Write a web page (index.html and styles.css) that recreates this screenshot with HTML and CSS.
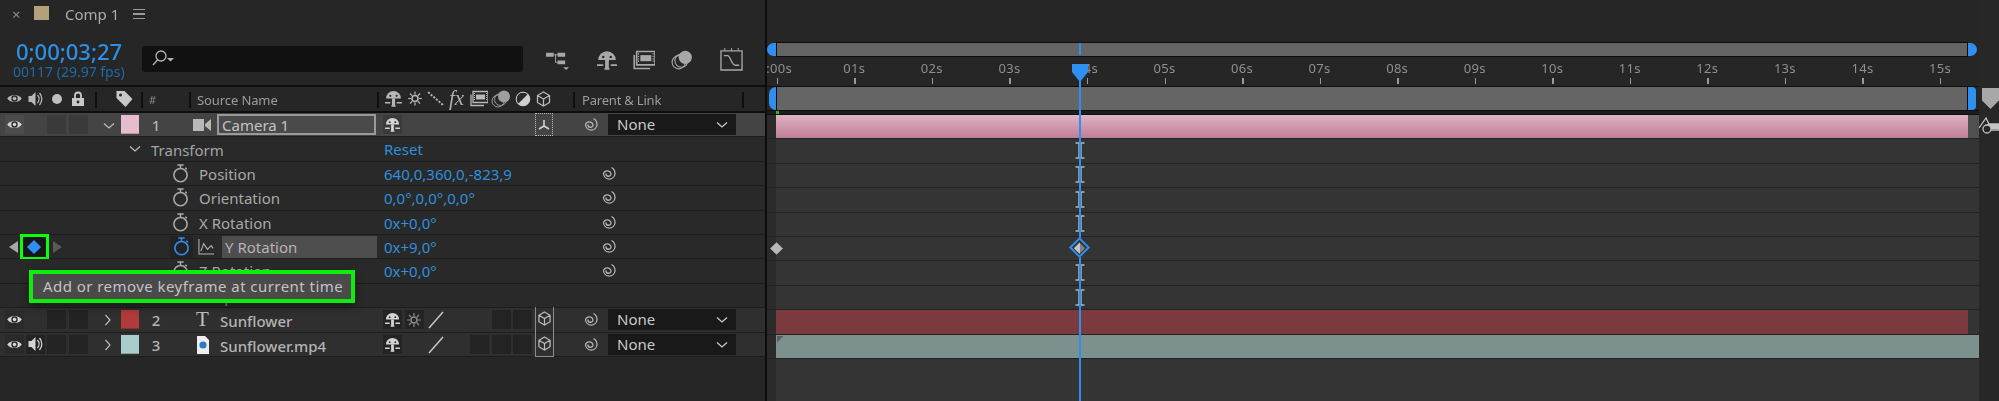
FILE: index.html
```html
<!DOCTYPE html>
<html lang="en">
<head>
<meta charset="utf-8">
<title>Comp 1</title>
<link rel="stylesheet" href="styles.css">
</head>
<body>
<svg class="defs" width="0" height="0" aria-hidden="true">
  <symbol id="eye" viewBox="0 0 14 10"><path d="M.2 5C3 .6 11 .6 13.800 5 11 9.400 3 9.400.2 5Z" fill="currentColor"/><circle cx="7" cy="5" r="3" fill="#2a2a2a"/><circle cx="7" cy="5" r="1.700" fill="currentColor"/></symbol>
  <symbol id="speaker" viewBox="0 0 16 16"><path d="M1 5h3l4-4v14l-4-4H1Z" fill="currentColor"/><path d="M10 4a6 6 0 0 1 0 8M12 2a9 9 0 0 1 0 12" fill="none" stroke="currentColor" stroke-width="1.300"/></symbol>
  <symbol id="lock" viewBox="0 0 14 16"><path d="M4 7V4.500a3 3 0 0 1 6 0V7" fill="none" stroke="currentColor" stroke-width="1.800"/><rect x="1" y="7" width="12" height="8" fill="currentColor"/><circle cx="7" cy="11" r="1.400" fill="#262626"/></symbol>
  <symbol id="tag" viewBox="0 0 18 18"><path d="M1 1h8l8 8-7 8-9-9Z" fill="currentColor"/><circle cx="5" cy="5" r="1.500" fill="#262626"/></symbol>
  <symbol id="shy" viewBox="0 0 18 16"><path d="M2 8a7 7 0 0 1 14 0Z" fill="currentColor"/><circle cx="6" cy="5.500" r="1" fill="#2a2a2a"/><circle cx="12" cy="5.500" r="1" fill="#2a2a2a"/><path d="M7.500 8h3v7h-3Z" fill="currentColor"/><path d="M1 12h5M12 12h5M7 15h4" stroke="currentColor" stroke-width="1.400"/></symbol>
  <symbol id="sun" viewBox="0 0 14 14"><circle cx="7" cy="7" r="3" fill="none" stroke="currentColor" stroke-width="1.500"/><path d="M7 0v3M7 11v3M0 7h3M11 7h3M2 2l2 2M10 10l2 2M12 2l-2 2M4 10l-2 2" stroke="currentColor" stroke-width="1.200"/></symbol>
  <symbol id="blur" viewBox="0 0 16 14"><path d="M1 1l14 12" stroke="currentColor" stroke-width="1.800" stroke-dasharray="2 1.300"/></symbol>
  <symbol id="film" viewBox="0 0 18 16"><path d="M3 1h15v11H3Z" fill="none" stroke="currentColor" stroke-width="1.300"/><path d="M1 4v11h13" fill="none" stroke="currentColor" stroke-width="1.300"/><path d="M6 4h9v5H6Z" fill="currentColor"/><path d="M4 3h1M4 5h1M4 7h1M4 9h1M16 3h1M16 5h1M16 7h1M16 9h1" stroke="currentColor"/></symbol>
  <symbol id="layers" viewBox="0 0 20 18"><circle cx="13" cy="7" r="6" fill="currentColor"/><circle cx="9.500" cy="10" r="6" fill="none" stroke="currentColor"/><circle cx="7" cy="11.500" r="6" fill="none" stroke="currentColor"/></symbol>
  <symbol id="adj" viewBox="0 0 16 16"><circle cx="8" cy="8" r="7" fill="#d0d0d0"/><path d="M3 13A7 7 0 0 1 13 3Z" fill="#2a2a2a"/><circle cx="8" cy="8" r="6.800" fill="none" stroke="#d0d0d0"/></symbol>
  <symbol id="cube" viewBox="0 0 14 16"><path d="M7 1l6 3.500v7L7 15l-6-3.500v-7ZM1 4.500 7 8l6-3.500M7 8v7" fill="none" stroke="currentColor" stroke-width="1.300"/></symbol>
  <symbol id="spiral" viewBox="0 0 18 18"><path d="M7 8.500A2.500 2.500 0 0 0 12 9 3.800 3.800 0 0 0 4.500 9 5.800 5.800 0 0 0 16 9 7 7 0 0 0 12.500 2.500" fill="none" stroke="currentColor" stroke-width="1.300"/></symbol>
  <symbol id="watch" viewBox="0 0 16 18"><circle cx="8" cy="10.500" r="6.300" fill="none" stroke="currentColor" stroke-width="1.500"/><path d="M5 1h6M8 1v3M12.500 3.500l1.500 1.500" stroke="currentColor" stroke-width="1.500" fill="none"/></symbol>
  <symbol id="chev-d" viewBox="0 0 12 8"><path d="M1 1.500l5 4.500 5-4.500" fill="none" stroke="currentColor" stroke-width="1.300"/></symbol>
  <symbol id="chev-r" viewBox="0 0 8 12"><path d="M1.500 1l4.500 5-4.500 5" fill="none" stroke="currentColor" stroke-width="1.200"/></symbol>
  <symbol id="ibeam" viewBox="0 0 10 17"><path d="M.5 1h9M.5 16h9" fill="none" stroke="#aab4bc" stroke-width="1.400"/><path d="M5 1v15" stroke="#aab4bc" stroke-width="3.500"/></symbol>
</svg>

<div class="app">
  <section class="left">
    <div class="tabbar">
      <span class="close">×</span>
      <span class="comp-swatch"></span>
      <span class="tab-name">Comp 1</span>
      <span class="burger"><i></i><i></i><i></i></span>
    </div>
    <div class="controls">
      <div class="time">
        <div class="timecode">0;00;03;27</div>
        <div class="frames">00117 (29.97 fps)</div>
      </div>
      <div class="search">
        <svg class="search-ico" viewBox="0 0 24 18"><circle cx="10" cy="7" r="5" fill="none" stroke="#b5b5b5" stroke-width="1.300"/><path d="M6.500 11 2 16" stroke="#b5b5b5" stroke-width="1.300"/><path d="M16 9h7l-3.500 3.500Z" fill="#b5b5b5"/></svg>
      </div>
      <div class="tools">
        <svg class="tool t-flow" viewBox="0 0 26 22"><path d="M1 3h8v4H1ZM13 3h8v4h-8ZM13 11h8v4h-8Z" fill="#a8a8a8"/><path d="M9 5h4M11 5v8h2" stroke="#a8a8a8" fill="none"/><path d="M19 18h6l-3 3Z" fill="#a8a8a8"/></svg>
        <svg class="tool t-shy"><use href="#shy"/></svg>
        <svg class="tool t-film"><use href="#film"/></svg>
        <svg class="tool t-layers"><use href="#layers"/></svg>
        <svg class="tool t-graph" viewBox="0 0 24 24"><path d="M1 3h22v20H1Z" fill="none" stroke="#a8a8a8" stroke-width="1.400"/><path d="M5 0v3M12 0v3M19 0v3" stroke="#a8a8a8"/><path d="M4 8h4c3 0 4 10 8 10h4" fill="none" stroke="#a8a8a8" stroke-width="1.400"/></svg>
      </div>
    </div>
    <div class="head">
      <svg class="ic h-eye"><use href="#eye"/></svg>
      <svg class="ic h-spk"><use href="#speaker"/></svg>
      <span class="h-dot"></span>
      <svg class="ic h-lock"><use href="#lock"/></svg>
      <span class="sep s1"></span>
      <svg class="ic h-tag"><use href="#tag"/></svg>
      <span class="sep s2"></span>
      <span class="h-num">#</span>
      <span class="sep s3"></span>
      <span class="h-src">Source Name</span>
      <span class="sep s4"></span>
      <svg class="ic h-sw"><use href="#shy"/></svg>
      <svg class="ic h-sw2"><use href="#sun"/></svg>
      <svg class="ic h-sw3"><use href="#blur"/></svg>
      <span class="h-fx">fx</span>
      <svg class="ic h-sw4"><use href="#film"/></svg>
      <svg class="ic h-sw5"><use href="#layers"/></svg>
      <svg class="ic h-sw6"><use href="#adj"/></svg>
      <svg class="ic h-sw7"><use href="#cube"/></svg>
      <span class="sep s5"></span>
      <span class="h-parent">Parent &amp; Link</span>
      <span class="sep s6"></span>
    </div>

    <div class="row layer sel">
      <span class="cell c-eye"><svg class="ic eye"><use href="#eye"/></svg></span>
      <span class="cell c-a"></span><span class="cell c-b"></span>
      <svg class="ic chev-d c-chev"><use href="#chev-d"/></svg>
      <span class="label pink"></span>
      <span class="num">1</span>
      <svg class="layer-ico" viewBox="0 0 18 14"><path d="M0 1h11v12H0ZM12 6l6-5v12l-6-5Z" fill="#b8b8b8"/></svg>
      <span class="name-box">Camera 1</span>
      <span class="cell c-s1"><svg class="ic sw"><use href="#shy"/></svg></span>
      <span class="cell c-cam"><svg class="ic cam" viewBox="0 0 16 14"><path d="M8 2v6M8 8 3 11M8 8l5 3" stroke="#d0d0d0" stroke-width="1.600" fill="none"/></svg></span>
      <svg class="ic spiral-l"><use href="#spiral"/></svg>
      <span class="select">None<svg class="ic sel-chev"><use href="#chev-d"/></svg></span>
    </div>

    <div class="row prop">
      <svg class="ic chev-d t-chev"><use href="#chev-d"/></svg>
      <span class="t-label">Transform</span>
      <span class="val">Reset</span>
    </div>
    <div class="row prop">
      <svg class="ic watch"><use href="#watch"/></svg>
      <span class="p-label">Position</span>
      <span class="val">640,0,360,0,-823,9</span>
      <svg class="ic spiral"><use href="#spiral"/></svg>
    </div>
    <div class="row prop">
      <svg class="ic watch"><use href="#watch"/></svg>
      <span class="p-label">Orientation</span>
      <span class="val">0,0°,0,0°,0,0°</span>
      <svg class="ic spiral"><use href="#spiral"/></svg>
    </div>
    <div class="row prop">
      <svg class="ic watch"><use href="#watch"/></svg>
      <span class="p-label">X Rotation</span>
      <span class="val">0x+0,0°</span>
      <svg class="ic spiral"><use href="#spiral"/></svg>
    </div>
    <div class="row prop">
      <span class="tri-l"></span>
      <span class="kf-box"><span class="kf-blue"></span></span>
      <span class="tri-r"></span>
      <span class="watch-box"><svg class="ic watch on"><use href="#watch"/></svg></span>
      <svg class="ic graph" viewBox="0 0 18 18"><path d="M1 1v16h16M3 14l3-8 4 6 4-4 2 3" fill="none" stroke="#b5b5b5" stroke-width="1.100"/></svg>
      <span class="y-label">Y Rotation</span>
      <span class="val">0x+9,0°</span>
      <svg class="ic spiral"><use href="#spiral"/></svg>
    </div>
    <div class="row prop">
      <svg class="ic watch"><use href="#watch"/></svg>
      <span class="p-label">Z Rotation</span>
      <span class="val">0x+0,0°</span>
      <svg class="ic spiral"><use href="#spiral"/></svg>
    </div>
    <div class="row prop">
      <svg class="ic chev-r o-chev"><use href="#chev-r"/></svg>
      <span class="o-label">Camera Options</span>
    </div>

    <div class="row layer">
      <span class="cell c-eye"><svg class="ic eye"><use href="#eye"/></svg></span>
      <span class="cell c-a"></span><span class="cell c-b"></span>
      <svg class="ic chev-r c-chev-r"><use href="#chev-r"/></svg>
      <span class="label red"></span>
      <span class="num">2</span>
      <span class="t-ico">T</span>
      <span class="name">Sunflower</span>
      <span class="cell c-s1"><svg class="ic sw"><use href="#shy"/></svg></span>
      <span class="cell c-s2"><svg class="ic sw-sun"><use href="#sun"/></svg></span>
      <svg class="ic slash" viewBox="0 0 16 18"><path d="M1 17 15 1" stroke="#c8c8c8" stroke-width="1.500"/></svg>
      <span class="cell c-s5"></span><span class="cell c-s6"></span>
      <span class="cube-cell top"><svg class="ic cube3"><use href="#cube"/></svg></span>
      <svg class="ic spiral-l"><use href="#spiral"/></svg>
      <span class="select">None<svg class="ic sel-chev"><use href="#chev-d"/></svg></span>
    </div>
    <div class="row layer">
      <span class="cell c-eye"><svg class="ic eye"><use href="#eye"/></svg></span>
      <span class="cell c-spk"><svg class="ic spk"><use href="#speaker"/></svg></span>
      <span class="cell c-a"></span><span class="cell c-b"></span>
      <svg class="ic chev-r c-chev-r"><use href="#chev-r"/></svg>
      <span class="label teal"></span>
      <span class="num">3</span>
      <svg class="file-ico" viewBox="0 0 14 18"><path d="M1 0h8l4 4v14H1Z" fill="#eee"/><circle cx="7" cy="9" r="3.600" fill="#2a7cc0"/></svg>
      <span class="name">Sunflower.mp4</span>
      <span class="cell c-s1"><svg class="ic sw"><use href="#shy"/></svg></span>
      <svg class="ic slash" viewBox="0 0 16 18"><path d="M1 17 15 1" stroke="#c8c8c8" stroke-width="1.500"/></svg>
      <span class="cell c-s4"></span><span class="cell c-s5"></span><span class="cell c-s6"></span>
      <span class="cube-cell bottom"><svg class="ic cube3"><use href="#cube"/></svg></span>
      <svg class="ic spiral-l"><use href="#spiral"/></svg>
      <span class="select">None<svg class="ic sel-chev"><use href="#chev-d"/></svg></span>
    </div>

    <div class="tooltip">Add or remove keyframe at current time</div>
  </section>

  <section class="timeline">
    <div class="tl-main">
      <div class="tl-top">
        <div class="navbar"><span class="h-l"></span><span class="nav-fill"></span><span class="h-r"></span></div>
        <div class="ruler">
          <span class="tick first">0:00s</span><span class="tick">01s</span><span class="tick">02s</span><span class="tick">03s</span>
          <span class="tick">04s</span><span class="tick">05s</span><span class="tick">06s</span><span class="tick">07s</span>
          <span class="tick">08s</span><span class="tick">09s</span><span class="tick">10s</span><span class="tick">11s</span>
          <span class="tick">12s</span><span class="tick">13s</span><span class="tick">14s</span><span class="tick">15s</span>
        </div>
        <div class="workarea"><span class="w-l"></span><span class="w-fill"></span><span class="w-r"></span></div>
        <div class="gap"><span class="green"></span></div>
      </div>
      <div class="track"><span class="bar pinkbar"></span><span class="bar-end"></span></div>
      <div class="track"></div>
      <div class="track"></div>
      <div class="track"></div>
      <div class="track"></div>
      <div class="track"><span class="kf-first"></span></div>
      <div class="track"></div>
      <div class="track"></div>
      <div class="track"><span class="bar redbar"></span></div>
      <div class="track"><span class="bar tealbar"><i class="corner"></i></span></div>

      <svg class="ibeam b1"><use href="#ibeam"/></svg>
      <svg class="ibeam b2"><use href="#ibeam"/></svg>
      <svg class="ibeam b3"><use href="#ibeam"/></svg>
      <svg class="ibeam b4"><use href="#ibeam"/></svg>
      <svg class="ibeam b6"><use href="#ibeam"/></svg>
      <svg class="ibeam b7"><use href="#ibeam"/></svg>
      <div class="playhead"><span class="ph-top"></span><span class="ph-head"></span><span class="ph-line"></span></div>
      <span class="kf-now"><i></i></span>
    </div>
    <aside class="tl-side">
      <span class="pent"></span>
      <svg class="side-ico" viewBox="0 0 21 18"><path d="M1 12 8 2l3 6h10v6H10" fill="none" stroke="#c4c4c4" stroke-width="1.300"/><path d="M9 8h12v5H10Z" fill="#c4c4c4"/><circle cx="9" cy="13" r="4" fill="#262626" stroke="#c4c4c4" stroke-width="1.300"/></svg>
    </aside>
  </section>
</div>
</body>
</html>
```
FILE: styles.css
```css
* { box-sizing: border-box; }
html, body { margin: 0; height: 100%; }
body {
  background: #262626;
  color: #a6a6a6;
  font-family: "Noto Sans", "Open Sans", sans-serif;
  font-size: 13px;
  overflow: hidden;
}
.defs { position: absolute; }
.app { display: flex; width: 1999px; height: 401px; filter: blur(.4px); }
.ic { display: block; color: #b8b8b8; }

/* left panel */
.left {
  position: relative;
  width: 767px;
  flex: none;
  border-right: 2px solid #0c0c0c;
}
.tabbar { display: flex; align-items: center; height: 28px; padding-left: 12px; }
.close { width: 22px; font-size: 15px; color: #8c8c8c; }
.comp-swatch { width: 15px; height: 14px; background: #b4a17c; margin-top: -2px; }
.tab-name { margin-left: 16px; font-size: 15px; color: #ababab; }
.burger { display: flex; flex-direction: column; gap: 3px; margin-left: 14px; }
.burger i { display: block; width: 12px; height: 1.500px; background: #9a9a9a; }

.controls { display: flex; height: 57px; padding-left: 13px; }
.time { width: 129px; padding-top: 10px; }
.timecode { font-size: 22px; line-height: 26px; font-weight: 500; color: #2d8fe6; margin-left: 3px; white-space: nowrap; }
.frames { font-size: 14px; line-height: 16px; color: #1f6aa8; white-space: nowrap; }
.search {
  width: 381px; height: 26px; margin-top: 18px;
  background: #111; border-radius: 3px;
  padding: 3px 0 0 9px;
}
.search-ico { display: block; width: 24px; height: 18px; }
.tools { position: relative; flex: 1; }
.tool { position: absolute; color: #a8a8a8; display: block; }
.t-flow { left: 22px; top: 22px; width: 25px; height: 21px; }
.t-shy { left: 72px; top: 22px; width: 24px; height: 20px; }
.t-film { left: 110px; top: 22px; width: 22px; height: 20px; }
.t-layers { left: 148px; top: 21px; width: 22px; height: 21px; }
.t-graph { left: 197px; top: 20px; width: 23px; height: 23px; }

.head {
  position: relative;
  height: 28px;
  border-top: 2px solid #0e0e0e;
  border-bottom: 2px solid #0e0e0e;
  color: #9c9c9c;
}
.head > * { position: absolute; }
.h-eye { left: 7px; top: 6px; width: 15px; height: 11px; }
.h-spk { left: 27px; top: 4px; width: 17px; height: 16px; }
.h-dot { left: 52px; top: 7px; width: 10px; height: 10px; border-radius: 50%; background: #c0c0c0; }
.h-lock { left: 71px; top: 4px; width: 14px; height: 16px; color: #c8c8c8; }
.h-tag { left: 115px; top: 3px; width: 19px; height: 18px; color: #c8c8c8; }
.sep { top: 5px; width: 2px; height: 16px; background: #0e0e0e; }
.s1 { left: 95px; } .s2 { left: 141px; } .s3 { left: 189px; } .s4 { left: 377px; } .s5 { left: 573px; } .s6 { left: 742px; }
.h-num { left: 149px; top: 4px; font-size: 11px; line-height: 18px; color: #8e8e8e; }
.h-src { left: 197px; top: 3px; line-height: 20px; letter-spacing: -.1px; }
.h-sw { left: 384px; top: 3px; width: 19px; height: 17px; }
.h-sw2 { left: 408px; top: 4px; width: 14px; height: 15px; }
.h-sw3 { left: 427px; top: 4px; width: 17px; height: 15px; }
.h-fx { left: 449px; top: -1px; font: italic 21px/24px "Liberation Serif", serif; color: #b0b0b0; }
.h-sw4 { left: 470px; top: 3px; width: 18px; height: 17px; }
.h-sw5 { left: 491px; top: 2px; width: 20px; height: 19px; color: #9e9e9e; }
.h-sw6 { left: 515px; top: 4px; width: 16px; height: 16px; }
.h-sw7 { left: 536px; top: 4px; width: 15px; height: 16px; }
.h-parent { left: 582px; top: 3px; line-height: 20px; letter-spacing: -.2px; }

/* rows */
.row {
  position: relative;
  height: 24.400px;
  border-bottom: 1px solid #1d1d1d;
  background: #292929;
}
.row > * { position: absolute; }
.layer { background: #2f2f2f; }
.layer.sel { background: #444; }
.cell { top: 2px; height: 19px; background: #232323; display: block; }
.sel .cell { background: #3a3a3a; }
.c-eye { left: 5px; width: 19px; background: #2a2a2a; }
.sel .c-eye { background: #4c4c4c; }
.c-spk { left: 26px; width: 19px; }
.c-a { left: 47px; width: 19px; }
.c-b { left: 69px; width: 19px; }
.eye { width: 15px; height: 11px; margin: 4px 2px; color: #d4d4d4; }
.spk { width: 17px; height: 16px; margin: 1px; color: #d4d4d4; }
.c-chev { left: 103px; top: 9px; width: 12px; height: 8px; }
.c-chev-r { left: 104px; top: 6px; width: 8px; height: 12px; }
.label { top: 2px; width: 18px; height: 19px; left: 121px; border-bottom: 1px solid #0003; }
.pink { background: #e6bccf; }
.red { background: #b23a3a; }
.teal { background: #a9cdcc; }
.num { left: 150px; top: 2px; width: 12px; text-align: center; font-size: 15px; font-weight: 500; line-height: 20px; color: #b4b4b4; }
.layer-ico { left: 193px; top: 5px; width: 18px; height: 14px; display: block; }
.name-box {
  left: 217px; top: 1px; width: 159px; height: 21px;
  border: 2px solid #9a9a9a; background: #4a4a4a;
  padding-left: 3px; line-height: 18px; font-size: 15px; color: #c4c4c4;
}
.name { left: 220px; top: 3px; font-size: 15px; font-weight: 500; line-height: 20px; color: #b4b4b4; }
.t-ico { left: 196px; top: 0; font: 21px/22px "Liberation Serif", serif; color: #c0c0c0; }
.file-ico { left: 196px; top: 3px; width: 14px; height: 18px; display: block; }
.c-s1 { left: 383px; width: 19px; }
.c-s2 { left: 405px; width: 19px; }
.c-s4 { left: 470px; width: 19px; }
.c-s5 { left: 492px; width: 19px; }
.c-s6 { left: 513px; width: 19px; }
.c-cam { left: 535px; top: 0; width: 18px; height: 23px; background: none; border: 1px dotted #bdbdbd; }
.sel .c-cam { background: none; }
.cam { width: 16px; height: 14px; margin-top: 4px; }
.sw { width: 17px; height: 15px; margin: 2px 1px; color: #d4d4d4; }
.sw-sun { width: 14px; height: 14px; margin: 3px 2px; color: #8a8a8a; }
.slash { left: 427px; top: 3px; width: 18px; height: 18px; }
.cube-cell { left: 535px; width: 19px; border: 1px solid #8c8c8c; }
.cube-cell.top { top: -1px; height: 25px; border-top: 0; border-bottom: 0; }
.cube-cell.bottom { top: -1px; height: 25px; border-top: 0; }
.cube3 { width: 13px; height: 15px; margin: 4px 2px; color: #bcbcbc; }
.spiral-l { left: 581px; top: 3px; width: 18px; height: 18px; color: #b4b4b4; }
.spiral { left: 599px; top: 3px; width: 18px; height: 18px; color: #b4b4b4; }
.select {
  left: 608px; top: 1px; width: 128px; height: 21px;
  background: #191919; padding-left: 9px;
  font-size: 15px; line-height: 21px; color: #c8c8c8;
}
.sel-chev { position: absolute; right: 8px; top: 7px; width: 12px; height: 8px; color: #c8c8c8; }

.t-chev { left: 129px; top: 8px; width: 12px; height: 8px; }
.t-label { left: 151px; top: 3px; font-size: 15px; line-height: 20px; color: #a4a4a4; }
.val { left: 384px; top: 2px; font-size: 15px; line-height: 20px; color: #2f8fdc; }
.watch { left: 172px; top: 2px; width: 17px; height: 19px; color: #a8a8a8; }
.p-label { left: 199px; top: 2px; font-size: 15px; line-height: 20px; color: #a8a8a8; }
.o-chev { left: 128px; top: 6px; width: 8px; height: 12px; }
.o-label { left: 154px; top: 2px; font-size: 15px; line-height: 20px; color: #a8a8a8; }
.tri-l { left: 9px; top: 6px; border: 6px solid transparent; border-left: 0; border-right: 9px solid #a8a8a8; }
.tri-r { left: 53px; top: 6px; border: 6px solid transparent; border-right: 0; border-left: 9px solid #5a5a5a; }
.kf-box {
  left: 20px; top: -1px; width: 29px; height: 26px;
  border: 3px solid #0dff0d; background: #171717;
  display: block;
}
.kf-blue { position: absolute; left: 6px; top: 5px; width: 10px; height: 10px; background: #2f8ff0; transform: rotate(45deg); }
.watch-box { left: 170px; top: 1px; width: 23px; height: 22px; background: #232323; display: block; }
.watch.on { left: 3px; top: 1px; position: absolute; color: #2f8ff0; }
.graph { left: 198px; top: 3px; width: 17px; height: 17px; }
.y-label {
  left: 222px; top: 1px; width: 155px; height: 22px;
  padding-left: 3px;
  background: #4e4e4e; font-size: 15px; line-height: 23px; color: #b4b4b4;
}

.tooltip {
  position: absolute;
  left: 29px; top: 270px; width: 326px; height: 33px;
  border: 4px solid #0dee0d;
  background: #4a4a4a;
  box-shadow: 0 4px 8px #0006;
  padding-left: 10px;
  font-size: 15px; line-height: 25px; letter-spacing: .45px; color: #c4c4c4;
  white-space: nowrap;
}

/* timeline */
.timeline { flex: 1; display: flex; min-width: 0; }
.tl-main { position: relative; width: 1212px; flex: none; background: linear-gradient(to right, #2b2b2b 9px, #343434 9px); }
.tl-top { background: #262626; }
.tl-side { width: 20px; flex: none; padding-top: 88px; display: flex; flex-direction: column; align-items: flex-end; background: #272727; }
.pent {
  display: block; width: 17px; height: 21px; background: #a8a8a8;
  clip-path: polygon(0 0, 100% 0, 100% 60%, 50% 100%, 0 60%);
}
.side-ico { display: block; width: 21px; height: 18px; margin-top: 7px; }

.navbar { display: flex; height: 13px; position: relative; top: 43px; margin-bottom: 43px; }
.h-l, .h-r { width: 9px; background: #2f8ff0; }
.h-l { border-radius: 7px 0 0 7px; }
.h-r { border-radius: 0 7px 7px 0; }
.nav-fill { flex: none; width: 1192px; background: #646464; border-left: 1px solid #0c0c0c; border-right: 1px solid #0c0c0c; box-shadow: 0 -1px 0 #0c0c0c, 0 1px 0 #0c0c0c; }

.ruler { display: flex; height: 30px; overflow: hidden; }
.tick {
  position: relative; flex: none; width: 77.550px; text-align: center;
  padding-top: 3px; line-height: 18px; letter-spacing: .3px; color: #8f8f8f;
}
.tick.first { margin-left: -29px; padding-right: 3px; }
.tick::after {
  content: ""; position: absolute; left: 50%; top: 22px; width: 1.500px; height: 6px; background: #9a9a9a;
}
.workarea { display: flex; height: 24px; padding-left: 2px; border-top: 1px solid #0e0e0e; background: #262626; }
.w-l, .w-r { width: 7px; background: #2f8ff0; }
.w-l { border-radius: 7px 0 0 7px; }
.w-r { width: 8px; border-radius: 0 4px 4px 0; }
.w-fill { flex: none; width: 1192px; background: #656565; border-left: 1px solid #0c0c0c; border-right: 1px solid #0c0c0c; }
.gap { position: relative; height: 5px; border-top: 1px solid #0e0e0e; background: #1c1c1c; border-bottom: 1px solid #0e0e0e; }
.green { position: absolute; left: 9px; top: 0; width: 3px; height: 3px; background: #12c412; }

.track {
  position: relative; height: 24.400px; padding-left: 9px;
  background: linear-gradient(to right, #2b2b2b 9px, #343434 9px);
  border-bottom: 1px solid #232323;
  display: flex;
}
.bar { display: block; height: 100%; position: relative; }
.pinkbar { width: 1192px; background: linear-gradient(#dfb0c3, #bf7f99); }
.bar-end { display: block; width: 11px; background: #505050; }
.redbar { width: 1192px; background: #7b3a3e; }
.tealbar { width: 1203px; background: #7c918e; }
.corner { position: absolute; left: 1px; top: 1px; width: 7px; height: 7px; background: #55605e; clip-path: polygon(0 0, 100% 0, 0 100%); }
.kf-first { position: absolute; left: 5px; top: 7px; width: 9px; height: 9px; background: #b8b8b8; transform: rotate(45deg); }

.playhead { position: absolute; left: 305px; top: 0; bottom: 0; width: 16px; }
.ph-top { position: absolute; left: 7px; top: 43px; width: 1.500px; height: 12px; background: #2f8ff0; }
.ph-head {
  position: absolute; left: 0; top: 64px; width: 16px; height: 18px; background: #2f8ff0;
  clip-path: polygon(0 0, 100% 0, 100% 45%, 50% 100%, 0 45%);
}
.ph-line { position: absolute; left: 7px; top: 80px; bottom: 0; width: 1.500px; background: #2f8ff0; }
.ibeam { position: absolute; left: 308px; width: 10px; height: 17px; display: block; }
.b1 { top: 142px; } .b2 { top: 166px; } .b3 { top: 191px; } .b4 { top: 215px; } .b6 { top: 264px; } .b7 { top: 289px; }
.kf-now {
  position: absolute; left: 305px; top: 240px; width: 15px; height: 15px;
  border: 2px solid #2f8ff0; background: #343434; transform: rotate(45deg); display: block;
}
.kf-now i { position: absolute; inset: 1.500px; background: linear-gradient(to top right, #c4c4c4 50%, #808080 50%); }
```
